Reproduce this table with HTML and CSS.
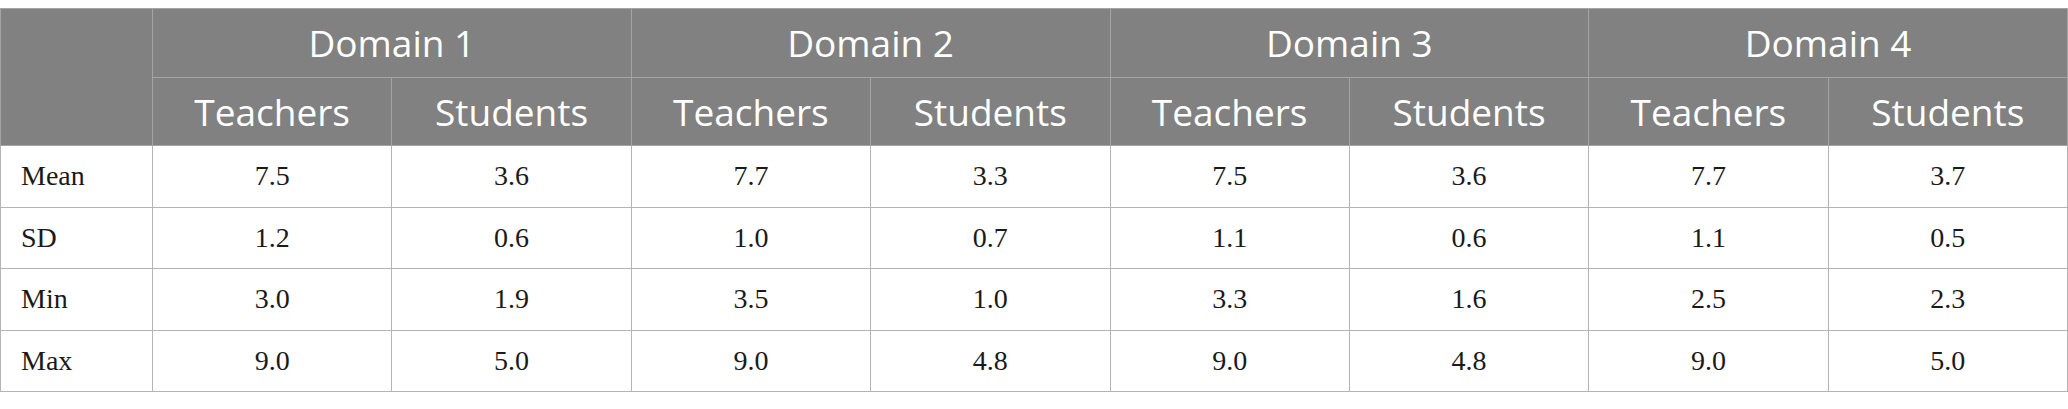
FILE: index.html
```html
<!DOCTYPE html>
<html lang="en">
<head>
<meta charset="utf-8">
<title>Domain scores</title>
<link rel="stylesheet" href="styles.css">
</head>
<body>
<table class="data-table">
  <colgroup>
    <col class="col-label">
    <col><col><col><col><col><col><col><col>
  </colgroup>
  <thead>
    <tr class="head-row">
      <th class="head-blank" rowspan="2"></th>
      <th colspan="2">Domain 1</th>
      <th colspan="2">Domain 2</th>
      <th colspan="2">Domain 3</th>
      <th colspan="2">Domain 4</th>
    </tr>
    <tr class="head-row">
      <th>Teachers</th><th>Students</th>
      <th>Teachers</th><th>Students</th>
      <th>Teachers</th><th>Students</th>
      <th>Teachers</th><th>Students</th>
    </tr>
  </thead>
  <tbody>
    <tr>
      <td class="row-label">Mean</td>
      <td>7.5</td><td>3.6</td><td>7.7</td><td>3.3</td><td>7.5</td><td>3.6</td><td>7.7</td><td>3.7</td>
    </tr>
    <tr>
      <td class="row-label">SD</td>
      <td>1.2</td><td>0.6</td><td>1.0</td><td>0.7</td><td>1.1</td><td>0.6</td><td>1.1</td><td>0.5</td>
    </tr>
    <tr>
      <td class="row-label">Min</td>
      <td>3.0</td><td>1.9</td><td>3.5</td><td>1.0</td><td>3.3</td><td>1.6</td><td>2.5</td><td>2.3</td>
    </tr>
    <tr>
      <td class="row-label">Max</td>
      <td>9.0</td><td>5.0</td><td>9.0</td><td>4.8</td><td>9.0</td><td>4.8</td><td>9.0</td><td>5.0</td>
    </tr>
  </tbody>
</table>
</body>
</html>
```
FILE: styles.css
```css
html, body {
  margin: 0;
  padding: 0;
  background: #ffffff;
}

body {
  padding-top: 8px;
}

.data-table {
  width: 2068px;
  border-collapse: collapse;
  table-layout: fixed;
  font-family: "Liberation Serif", "Times New Roman", serif;
}

.col-label {
  width: 152px;
}

.data-table th,
.data-table td {
  border: 1px solid #b4b4b4;
  padding: 0;
}

.head-row th {
  background: #808180;
  color: #ffffff;
  font-family: "Open Sans", "Noto Sans", sans-serif;
  font-weight: 400;
  font-size: 37px;
  height: 67.5px;
  text-align: center;
  vertical-align: middle;
  border-color: #a3a4a3;
}

.data-table td {
  height: 60.5px;
  font-size: 28px;
  color: #1a1a1a;
  text-align: center;
  vertical-align: middle;
}

.data-table td.row-label {
  text-align: left;
  padding-left: 20px;
}
```
